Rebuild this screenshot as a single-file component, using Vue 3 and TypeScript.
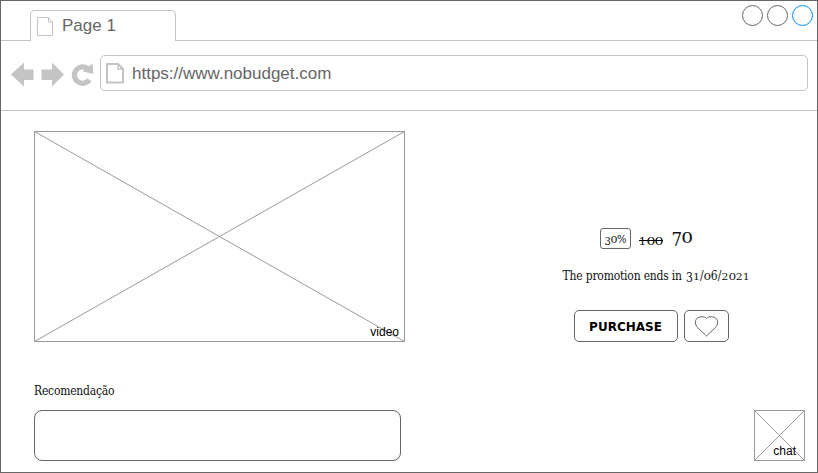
<script setup lang="ts">
interface Glyph {
  char: string
  kind: string
}

// Old-style figures: 0-2 sit at x-height, 6 and 8 ascend, the rest descend.
function oldStyle(text: string): Glyph[] {
  return [...text].map((char) => {
    let kind = 'regular'
    if (char === '0') kind = 'zero'
    else if (/[12]/.test(char)) kind = 'short'
    else if (/[34579]/.test(char)) kind = 'low'
    return { char, kind }
  })
}

const discount = oldStyle('30%')
const oldPrice = oldStyle('100')
const price = oldStyle('70')
const endDate = oldStyle('31/06/2021')
const controls = ['plain', 'plain', 'active']
</script>

<template>
  <div class="window">
    <header class="tabs">
      <div class="tab">
        <svg class="tab-page" width="17" height="20" viewBox="0 0 17 20">
          <path d="M.5 .5H11.500L15.500 5V18.500H.5ZM11.500 .5V5H15.500" />
        </svg>
        <span class="tab-title">Page 1</span>
      </div>
      <div class="controls">
        <svg v-for="(c, i) in controls" :key="i" :class="c" width="22" height="22" viewBox="0 0 22 22">
          <circle cx="11.5" cy="10.5" r="10" />
        </svg>
      </div>
    </header>

    <nav class="toolbar">
      <svg class="nav-icons" width="84" height="26" viewBox="0 0 84 26">
        <path d="M0 12.500L13 .5V7.500H22.500V18H13V24.500Z" />
        <path d="M53 12.500L41 .5V7.500H30.500V18H41V24.500Z" />
        <path class="reload" d="M78.300 17.800A8.200 8.200 0 1 1 76.500 6.500" />
        <path d="M81.500 1.500L82.500 12L71.500 9.500Z" />
      </svg>
      <div class="address">
        <svg width="18" height="21" viewBox="0 0 18 21">
          <path d="M1 1H12L17 6V19.500H1Z" />
          <path class="fold" d="M12 1V6H17" />
        </svg>
        <span>https://www.nobudget.com</span>
      </div>
    </nav>

    <main class="content">
      <section class="media">
        <div class="placeholder video">
          <svg width="371" height="211" viewBox="0 0 371 211">
            <path d="M.5 .5H370.500V210.500H.5ZL370.500 210.500M370.500 .5L.5 210.500" />
          </svg>
          <span>video</span>
        </div>
        <p class="recommend">Recomendação</p>
        <div class="recommend-box"></div>
      </section>

      <section class="offer">
        <div class="prices">
          <span class="badge"><i v-for="(g, i) in discount" :key="i" :class="g.kind">{{ g.char }}</i></span>
          <span class="old"><i v-for="(g, i) in oldPrice" :key="i" :class="g.kind">{{ g.char }}</i></span>
          <span class="new"><i v-for="(g, i) in price" :key="i" :class="g.kind">{{ g.char }}</i></span>
        </div>
        <p class="promo"><span class="promo-text">The promotion ends in</span><span class="date"><i v-for="(g, i) in endDate" :key="i" :class="g.kind">{{ g.char }}</i></span></p>
        <div class="actions">
          <button class="buy">PURCHASE</button>
          <button class="like" aria-label="Favorite">
            <svg width="24" height="21" viewBox="0 0 24 21">
              <path d="M12.500 20L3.500 11.500C-.5 7 1.500 1 7 .8C9.500 .5 11.500 1.200 12.500 2.500C13.500 1.200 15.500 .5 18 .8C23.500 1 25.500 7 21.500 11.500Z" />
            </svg>
          </button>
        </div>
      </section>

      <aside class="placeholder chat">
        <svg width="51" height="51" viewBox="0 0 51 51">
          <path d="M.5 .5H50.500V50.500H.5ZL50.500 50.500M50.500 .5L.5 50.500" />
        </svg>
        <span>chat</span>
      </aside>
    </main>
  </div>
</template>

<style>
body {
  margin: 0;
  background: #fff;
}
</style>

<style scoped>
.window {
  box-sizing: border-box;
  width: 818px;
  height: 473px;
  border: 1px solid #666;
  background: #fff;
  overflow: hidden;
  font-family: "Liberation Sans", Arial, sans-serif;
}
svg {
  display: block;
  fill: none;
  stroke-width: 1;
}
p {
  margin: 0;
}
.tabs {
  box-sizing: border-box;
  display: flex;
  justify-content: space-between;
  height: 40px;
  padding: 9px 4px 0 29px;
  box-shadow: inset 0 -1px #c4c4c4;
}
.tab {
  box-sizing: border-box;
  display: flex;
  width: 146px;
  height: 31px;
  padding: 6px 0 0 6px;
  border: 1px solid #c4c4c4;
  border-bottom: 0;
  border-radius: 5px 5px 0 0;
  background: #fff;
}
.tab-page {
  stroke: #c4c4c4;
}
.tab-title {
  margin-left: 8px;
  font-size: 17px;
  line-height: 18px;
  color: #666;
}
.controls {
  display: flex;
  gap: 3px;
  margin-top: -5px;
}
.plain {
  stroke: #666;
}
.active {
  stroke: #008cff;
}
.toolbar {
  box-sizing: border-box;
  display: flex;
  height: 70px;
  padding: 14px 9px 0 10px;
  border-bottom: 1px solid #c4c4c4;
}
.nav-icons {
  margin-top: 7px;
  fill: #c4c4c4;
}
.reload {
  fill: none;
  stroke: #c4c4c4;
  stroke-width: 5.2;
}
.address {
  box-sizing: border-box;
  display: flex;
  flex: 1;
  height: 36px;
  margin-left: 5px;
  padding: 7px 0 0 5px;
  border: 1px solid #c4c4c4;
  border-radius: 5px;
  font-size: 17px;
  line-height: 22px;
  color: #666;
}
.address svg {
  stroke: #c4c4c4;
  stroke-width: 2;
}
.address .fold {
  stroke-width: 1.5;
}
.address span {
  margin-left: 8px;
}
.content {
  display: grid;
  grid-template-columns: 371px 190px 51px;
  column-gap: 0;
  justify-content: space-between;
  padding: 20px 12px 0 33px;
}
.placeholder {
  display: grid;
  font-size: 12px;
  line-height: 14px;
  color: #000;
}
.placeholder svg,
.placeholder span {
  grid-area: 1 / 1;
}
.placeholder span {
  align-self: end;
  justify-self: end;
}
.placeholder svg {
  stroke: #999;
}
.video span {
  margin: 0 6px 3px 0;
}
.chat {
  align-self: end;
}
.chat span {
  margin: 0 9px 3px 0;
}
.recommend,
.prices,
.promo {
  font-family: "DejaVu Serif Condensed", "DejaVu Serif", serif;
  font-stretch: condensed;
  font-size: 12px;
  color: #111;
}
.recommend {
  margin-top: 41px;
  line-height: 16px;
  letter-spacing: -0.22px;
}
.recommend-box {
  box-sizing: border-box;
  width: 367px;
  height: 51px;
  margin-top: 11px;
  border: 1px solid #666;
  border-radius: 8px;
}
.offer {
  padding-top: 97px;
  margin-left: 77px;
  margin-right: -77px;
}
.prices {
  display: flex;
  padding-left: 38px;
  height: 21px;
  white-space: nowrap;
}
i {
  display: inline-block;
  font-style: normal;
  line-height: 1;
}
.short {
  transform-origin: 50% 85%;
  transform: scaleY(0.8);
}
.zero {
  transform-origin: 50% 85%;
  transform: scale(1.12, 0.8);
}
.low {
  transform-origin: 50% 85%;
  transform: translateY(0.18em);
}
.badge {
  box-sizing: border-box;
  width: 31px;
  height: 21px;
  margin-right: 8px;
  padding-left: 1px;
  border: 1px solid #666;
  border-radius: 3px;
  font-size: 11px;
  line-height: 22px;
  text-align: center;
}
.old {
  width: 25px;
  font-size: 14px;
  line-height: 25px;
  background: linear-gradient(#000, #000) 0 12px / 24px 1px no-repeat;
}
.new {
  margin-left: 8px;
  font-size: 18.5px;
  line-height: 17px;
}
.promo {
  display: flex;
  gap: 4px;
  margin-top: 19px;
  padding-left: 1px;
  line-height: 17px;
  white-space: nowrap;
}
.promo-text {
  letter-spacing: -0.2px;
}
.date {
  letter-spacing: 0.15px;
}
.actions {
  display: flex;
  gap: 6px;
  margin-top: 25px;
  padding-left: 12px;
}
button {
  box-sizing: border-box;
  height: 32px;
  padding: 0;
  border: 1px solid #666;
  border-radius: 5px;
  background: #fff;
}
.buy {
  width: 104px;
  font: bold 12px/32px "DejaVu Sans", sans-serif;
  color: #000;
}
.like {
  display: grid;
  place-items: center;
  width: 45px;
}
.like svg {
  stroke: #666;
}
</style>
